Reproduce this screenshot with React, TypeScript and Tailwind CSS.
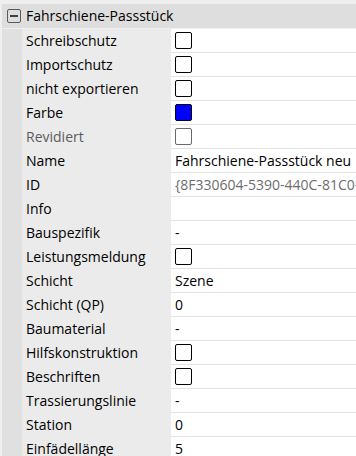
import React from "react";

type Row = {
    label: string;
    kind: "check" | "color" | "text" | "empty";
    value?: string;
    muted?: boolean;
    grayValue?: boolean;
};

const rows: Row[] = [
    { label: "Schreibschutz", kind: "check" },
    { label: "Importschutz", kind: "check" },
    { label: "nicht exportieren", kind: "check" },
    { label: "Farbe", kind: "color" },
    { label: "Revidiert", kind: "check", muted: true },
    { label: "Name", kind: "text", value: "Fahrschiene-Passstück neu" },
    { label: "ID", kind: "text", value: "{8F330604-5390-440C-81C0-3E7D1A2B9F44}", grayValue: true },
    { label: "Info", kind: "empty" },
    { label: "Bauspezifik", kind: "text", value: "-" },
    { label: "Leistungsmeldung", kind: "check" },
    { label: "Schicht", kind: "text", value: "Szene" },
    { label: "Schicht (QP)", kind: "text", value: "0" },
    { label: "Baumaterial", kind: "text", value: "-" },
    { label: "Hilfskonstruktion", kind: "check" },
    { label: "Beschriften", kind: "check" },
    { label: "Trassierungslinie", kind: "text", value: "-" },
    { label: "Station", kind: "text", value: "0" },
    { label: "Einfädellänge", kind: "text", value: "5" },
];

const Value = ({ row }: { row: Row }) => {
    if (row.kind === "check") {
        return (
            <div
                className={
                    "w-[17px] h-[17px] rounded-[2px] bg-white border " +
                    (row.muted ? "border-[#6a6a6a]" : "border-black")
                }
            />
        );
    }
    if (row.kind === "color") {
        return <div className="w-[17px] h-[17px] rounded-[2px] bg-[#0000ff] border border-black" />;
    }
    if (row.kind === "text") {
        return (
            <span className={"whitespace-nowrap " + (row.grayValue ? "text-[#6d6d6d]" : "text-black")}>
                {row.value}
            </span>
        );
    }
    return null;
};

export default function App() {
    return (
        <div
            className="w-[356px] h-[456px] overflow-hidden bg-[#efefef] pt-[4px] pl-[2px] text-[14px] leading-none text-black"
            style={{ fontFamily: '"Open Sans", "Noto Sans", sans-serif' }}
        >
            {/* group header */}
            <div className="h-[24px] bg-[#dedede] flex items-center">
                <div className="ml-[5px] w-[14px] h-[14px] border border-[#5a5a5a] rounded-[2px] flex items-center justify-center">
                    <div className="w-[8px] h-[2px] bg-[#404040]" />
                </div>
                <span className="ml-[5px] whitespace-nowrap">Fahrschiene-Passstück</span>
            </div>
            {/* properties */}
            <div className="flex pt-[1px]">
                <div className="w-[20px] shrink-0 bg-[#e0e0e0]" />
                <div className="flex-1 flex flex-col min-w-0">
                    {rows.map((row, index) => (
                        <div key={index} className="flex h-[24px] shrink-0">
                            <div
                                className={
                                    "w-[149px] shrink-0 bg-[#ebebeb] flex items-center pl-[4px] whitespace-nowrap " +
                                    (row.muted ? "text-[#5c5c5c]" : "text-black")
                                }
                            >
                                {row.label}
                            </div>
                            <div className="flex-1 min-w-0 overflow-hidden bg-white border-b border-[#e3e3e3] flex items-center pl-[4px]">
                                <Value row={row} />
                            </div>
                        </div>
                    ))}
                </div>
            </div>
        </div>
    );
}
